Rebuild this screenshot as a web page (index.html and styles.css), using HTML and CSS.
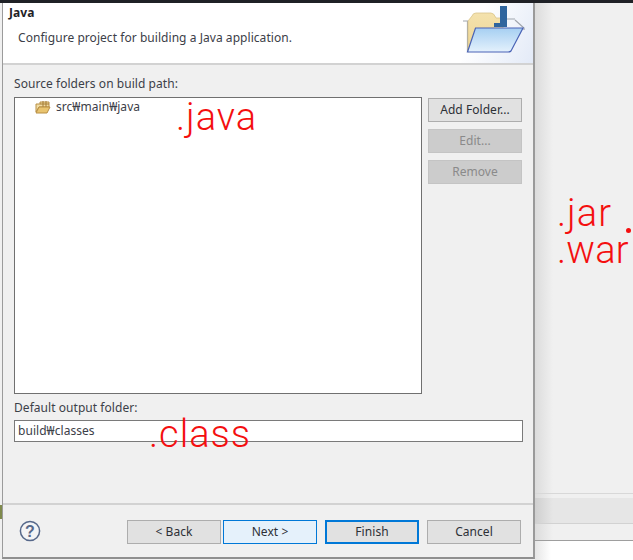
FILE: index.html
```html
<!DOCTYPE html>
<html lang="en">
<head>
<meta charset="utf-8">
<title>Java</title>
<link rel="stylesheet" href="styles.css">
</head>
<body>
<div class="desktop">
  <div class="topbar"></div>
  <div class="stage">
    <div class="edge"><div class="edge-mark"></div></div>
    <section class="dialog">
      <header class="banner">
        <div class="banner-text">
          <h1 class="title">Java</h1>
          <p class="subtitle">Configure project for building a Java application.</p>
        </div>
        <div class="banner-art">
          <svg class="folder-art" width="72" height="59" viewBox="461 3 72 59">
            <defs>
              <linearGradient id="front" x1="0" y1="0" x2="0" y2="1"><stop offset="0" stop-color="#a6cff2"/><stop offset="1" stop-color="#e4f1fc"/></linearGradient>
              <linearGradient id="back" x1="0" y1="0" x2="0" y2="1"><stop offset="0" stop-color="#f4e2ad"/><stop offset="1" stop-color="#ecd594"/></linearGradient>
            </defs>
            <path d="M463 21 H468 M467.5 21 V52" stroke="#a0a5ad" stroke-width="1.2" fill="none"/>
            <path d="M468 52 V21 L472 16 Q473 13 476 13 H491 Q494 13 496 18 H503 V40 Z" fill="url(#back)" stroke="#d9c48a" stroke-width=".8"/>
            <path d="M500 6 H507 V27 H494 V23 H500 Z" fill="#2f659e"/>
            <path d="M507 19 H515 M515 20 L524 28 V30" stroke="#a0a5ad" stroke-width="1.2" fill="none"/>
            <path d="M475.5 28 H523 L511 51 Q510 52 508 52 H467.5 Z" fill="url(#front)" stroke="#4a63b5" stroke-width="1.2"/>
          </svg>
        </div>
      </header>
      <main class="body">
        <label class="label">Source folders on build path:</label>
        <div class="source-row">
          <div class="tree">
            <div class="tree-item">
              <svg class="pkg-icon" width="16" height="14" viewBox="0 0 16 14">
                <path d="M1 12 V4 H5 V2 H14 V7 H4 Z" fill="#f1dca4" stroke="#b88f45"/>
                <path d="M8 1 V7 M11 1 V7 M5 4 H14" stroke="#a57c35"/>
                <path d="M1 13 L4 7 H15 L12 13 Z" fill="#e9c46f" stroke="#b88f45"/>
              </svg>
              <span>src₩main₩java</span>
            </div>
          </div>
          <div class="side-buttons">
            <button class="btn side">Add Folder...</button>
            <button class="btn side off">Edit...</button>
            <button class="btn side off">Remove</button>
          </div>
        </div>
        <label class="label output-label">Default output folder:</label>
        <div class="input">build₩classes</div>
      </main>
      <footer class="footer">
        <svg class="help" width="22" height="22" viewBox="0 0 22 22">
          <circle cx="11" cy="11" r="9.6" fill="#f3f4f6" stroke="#56688a" stroke-width="1.5"/>
          <text x="11" y="16.5" text-anchor="middle" class="help-q">?</text>
        </svg>
        <div class="footer-buttons">
          <button class="btn foot">&lt; Back</button>
          <button class="btn foot next">Next &gt;</button>
          <button class="btn foot finish">Finish</button>
          <button class="btn foot cancel">Cancel</button>
        </div>
      </footer>
    </section>
    <div class="behind">
      <div class="behind-top"></div>
      <div class="behind-bar"></div>
      <div class="behind-white"></div>
    </div>
    <span class="note n-java">.java</span>
    <span class="note n-class">.class</span>
    <span class="note n-jar">.jar</span>
    <span class="note n-war">.war</span>
    <span class="dot"></span>
  </div>
</div>
</body>
</html>
```
FILE: styles.css
```css
* { box-sizing: border-box; }
html, body { margin: 0; padding: 0; }
body { width: 633px; height: 560px; overflow: hidden; font-family: "Noto Sans", "Noto Sans CJK KR", sans-serif; font-size: 12px; letter-spacing: .05px; color: #33363c; background: #f0f0f0; }
.desktop { width: 633px; height: 560px; display: flex; flex-direction: column; }
.topbar { height: 3px; background: #1f2126; flex: none; }
.stage { position: relative; flex: 1; display: flex; min-height: 0; }
.edge { width: 2px; flex: none; background: #f0f0f0; padding-top: 502px; }
.edge-mark { height: 14px; background: #7f8a4c; }
.dialog { width: 533px; height: 556px; flex: none; display: flex; flex-direction: column; background: #f0f0f0; border-left: 1px solid #9b9b9b; border-right: 2px solid #9a9a9a; border-bottom: 2px solid #8f8f8f; }
.banner { height: 62px; flex: none; display: flex; justify-content: space-between; background: #fff; border-bottom: 2px solid #d2d2d2; }
.banner-text { padding-left: 6px; }
.title { margin: 1px 0 0; font-size: 12px; line-height: 18px; font-weight: 700; color: #1f2226; }
.subtitle { margin: 7px 0 0 9px; font-size: 12px; line-height: 18px; color: #3c4048; }
.banner-art { width: 72px; background: linear-gradient(115deg, #fff 25%, #e3eaf7 100%); }
.folder-art { display: block; }
.body { flex: 1; padding: 10px 8px 0 11px; display: flex; flex-direction: column; }
.label { display: block; font-size: 12px; line-height: 18px; color: #3c4048; }
.source-row { display: flex; margin-top: 4px; }
.tree { width: 408px; height: 297px; background: #fff; border: 1px solid #707070; padding: 0 0 0 20px; }
.tree-item { display: flex; align-items: center; gap: 5px; height: 17px; font-size: 12px; color: #3c4048; }
.pkg-icon { flex: none; }
.side-buttons { display: flex; flex-direction: column; gap: 7px; margin: 1px 0 0 6px; }
.btn { display: block; padding: 0; font-family: inherit; font-size: 12px; letter-spacing: .05px; line-height: 16px; color: #2d3036; background: #e1e1e1; border: 1px solid #adadad; }
.side { width: 94px; height: 24px; }
.off { background: #cccccc; border-color: #c4c4c4; color: #8a8a8a; }
.output-label { margin-top: 5px; }
.input { width: 509px; height: 22px; margin-top: 3px; background: #fff; border: 1px solid #7a7a7a; padding-left: 3px; line-height: 20px; font-size: 12px; color: #3c4048; }
.footer { height: 54px; flex: none; display: flex; justify-content: space-between; align-items: flex-start; padding: 15px 12px 0 16px; border-top: 2px solid #d2d2d2; }
.help { margin-top: 0; }
.help-q { font-family: "Liberation Sans", sans-serif; font-size: 16px; font-weight: 700; fill: #56688a; }
.footer-buttons { display: flex; gap: 8px; }
.foot { width: 94px; height: 24px; }
.next { background: #e5f1fb; border-color: #0078d7; margin-left: -6px; }
.finish { border: 2px solid #0078d7; }
.behind { flex: 1; position: relative; display: flex; flex-direction: column; padding-top: 495px; background: linear-gradient(90deg, #dcdcdc 0, #f0f0f0 18px); }
.behind-top { height: 1px; background: #d8d8d8; margin-top: -5px; margin-bottom: 4px; }
.behind-bar { height: 26px; background: linear-gradient(90deg, #cfcfcf 0, #e6e6e6 18px); border-bottom: 1px solid #d2d2d2; }
.behind-white { flex: 1; background: linear-gradient(90deg, #e6e6e6 0, #fff 16px); border-top: 1px solid #9e9e9e; margin-top: 16px; }
.note { position: absolute; font-family: Roboto, "Liberation Sans", sans-serif; font-weight: 300; color: #f40f0f; line-height: .85; letter-spacing: 1px; font-size: 38px; }
.n-java { left: 176px; top: 98px; }
.n-class { left: 149px; top: 415px; }
.n-jar { left: 557px; top: 194px; }
.n-war { left: 557px; top: 231px; letter-spacing: .2px; }
.dot { position: absolute; left: 626px; top: 225px; width: 5px; height: 5px; border-radius: 50%; background: #f40f0f; }
```
